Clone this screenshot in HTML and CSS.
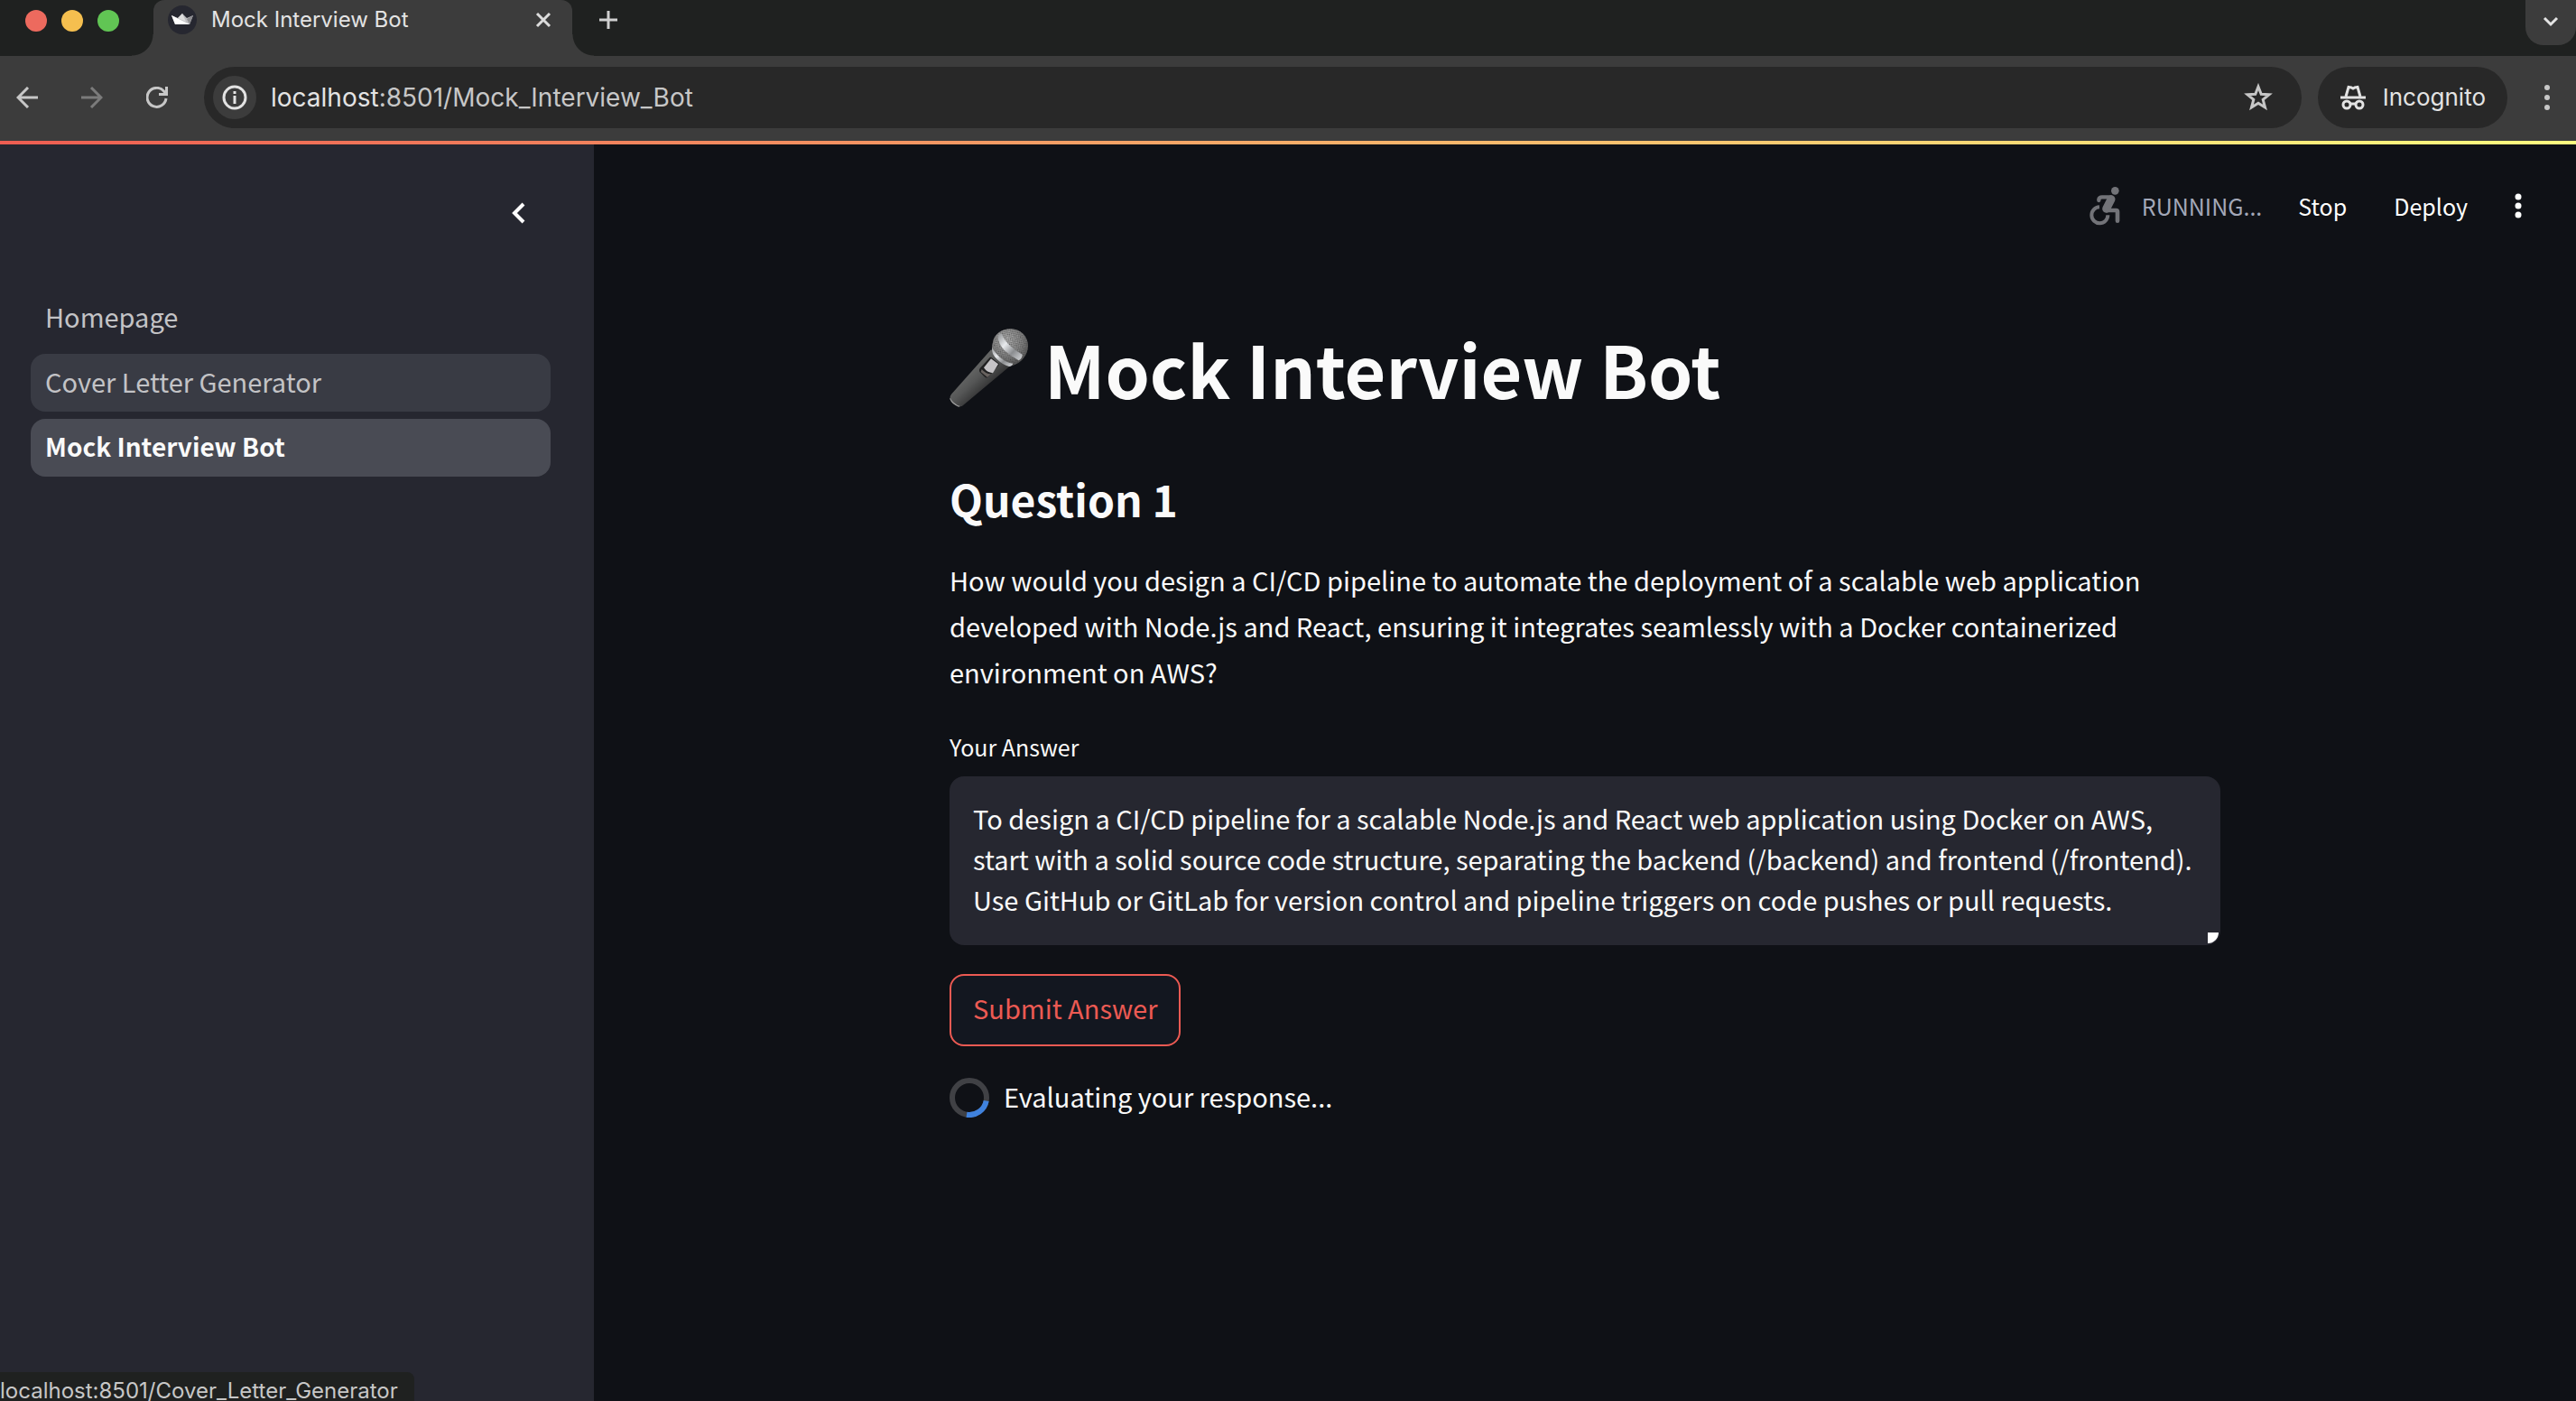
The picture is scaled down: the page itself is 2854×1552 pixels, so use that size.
FILE: index.html
```html
<!DOCTYPE html>
<html lang="en">
<head>
<meta charset="utf-8">
<meta name="viewport" content="width=device-width, initial-scale=1">
<title>Mock Interview Bot</title>
<link rel="stylesheet" href="styles.css">
</head>
<body>
<div class="tabstrip">
  <div class="lights"><span class="light red"></span><span class="light yellow"></span><span class="light green"></span></div>
  <div class="tab">
    <svg class="favicon" viewBox="0 0 32 32" aria-hidden="true"><circle cx="16" cy="16" r="16" fill="#262730"/><path d="M4 11L11 14L16 9L21 14L28 11L24 21H8Z" fill="#bdbdc0"/><path d="M4 11L24 21H8Z" fill="#fff"/><path d="M11 14L16 9L20 18Z" fill="#ddd"/><path d="M28 11L21 15L24 21Z" fill="#8d8d90"/></svg>
    <span class="tab-title">Mock Interview Bot</span>
    <button class="icon-btn" aria-label="Close tab"><svg width="18" height="18" viewBox="0 0 18 18"><path d="M2 2L16 16M16 2L2 16" stroke="#dcdcdc" stroke-width="3"/></svg></button>
  </div>
  <button class="icon-btn new-tab" aria-label="New tab"><svg width="20" height="20" viewBox="0 0 20 20"><path d="M10 0V20M0 10H20" stroke="#d0d0d0" stroke-width="3"/></svg></button>
  <button class="tab-search" aria-label="Search tabs"><svg width="18" height="12" viewBox="0 0 18 12"><path d="M2 2L9 9L16 2" fill="none" stroke="#e3e3e3" stroke-width="3"/></svg></button>
</div>

<div class="toolbar">
  <div class="nav-buttons">
    <button class="icon-btn" aria-label="Back"><svg width="24" height="24" viewBox="0 0 24 24"><path d="M13 1L2 12L13 23M2 12H24" fill="none" stroke="#c7c7c7" stroke-width="3"/></svg></button>
    <button class="icon-btn" aria-label="Forward"><svg width="24" height="24" viewBox="0 0 24 24"><path d="M11 1L22 12L11 23M22 12H0" fill="none" stroke="#7b7b7b" stroke-width="3"/></svg></button>
    <button class="icon-btn" aria-label="Reload"><svg width="24" height="24" viewBox="0 0 24 24"><path d="M22 13A10.500 10.500 0 1 1 19.500 5L22 8" fill="none" stroke="#c7c7c7" stroke-width="3"/><path d="M22.500 0V8.500H14" fill="none" stroke="#c7c7c7" stroke-width="3"/></svg></button>
  </div>
  <div class="omnibox">
    <button class="site-info" aria-label="Site information"><svg width="28" height="28" viewBox="0 0 28 28"><circle cx="14" cy="14" r="12" fill="none" stroke="#e3e3e3" stroke-width="3"/><path d="M14 12V21M14 7V10" stroke="#e3e3e3" stroke-width="3"/></svg></button>
    <span class="url"><span class="host">localhost</span>:8501/Mock_Interview_Bot</span>
    <button class="icon-btn" aria-label="Bookmark this page"><svg width="32" height="32" viewBox="0 0 32 32"><path d="M16 4L19.200 12.300L28 12.800L21.200 18.400L23.500 27L16 22.200L8.500 27L10.800 18.400L4 12.800L12.800 12.300Z" fill="none" stroke="#c7c7c7" stroke-width="3"/></svg></button>
  </div>
  <button class="incognito">
    <svg width="30" height="28" viewBox="0 0 30 28" aria-hidden="true"><g fill="none" stroke="#e3e3e3" stroke-width="3"><path d="M1 14H29"/><path d="M7 13L10 2.500L13 3L15 4L17 3L20 2.500L23 13"/><circle cx="8" cy="22" r="4"/><circle cx="22" cy="22" r="4"/><path d="M12 21H18"/></g></svg>
    Incognito
  </button>
  <button class="icon-btn" aria-label="Browser menu"><svg width="8" height="28" viewBox="0 0 8 28" fill="#c7c7c7"><circle cx="4" cy="3" r="3"/><circle cx="4" cy="14" r="3"/><circle cx="4" cy="25" r="3"/></svg></button>
</div>

<div class="decoration"></div>

<div class="app">
  <aside class="sidebar">
    <div class="sidebar-head">
      <button class="icon-btn" aria-label="Collapse sidebar"><svg width="16" height="24" viewBox="0 0 16 24"><path d="M14 2L4 12L14 22" fill="none" stroke="#fff" stroke-width="4"/></svg></button>
    </div>
    <nav class="pages">
      <a href="#">Homepage</a>
      <a href="#" class="hovered">Cover Letter Generator</a>
      <a href="#" class="current" aria-current="page">Mock Interview Bot</a>
    </nav>
  </aside>

  <main class="main">
    <header class="app-header">
      <div class="status">
        <svg class="status-icon" viewBox="44 50 102 132" aria-hidden="true"><circle cx="129" cy="66" r="13" fill="#727378"/><g fill="none" stroke="#727378"><path d="M75 98V95Q76 87 86 87H116" stroke-width="13" stroke-linecap="round" stroke-linejoin="round"/><path d="M116 94L100 126" stroke-width="27" stroke-linecap="round"/><path d="M98 131H132Q137 131 137 136V166" stroke-width="14" stroke-linecap="round"/><path d="M77 120A27 27 0 1 0 105 147" stroke-width="12"/></g></svg>
        <span>RUNNING...</span>
      </div>
      <button class="header-btn">Stop</button>
      <button class="header-btn deploy">Deploy</button>
      <button class="icon-btn" aria-label="Main menu"><svg width="8" height="28" viewBox="0 0 8 28" fill="#fff"><circle cx="4" cy="4" r="3.500"/><circle cx="4" cy="14" r="3.500"/><circle cx="4" cy="24" r="3.500"/></svg></button>
    </header>

    <div class="content">
      <h1>
        <svg class="mic" viewBox="36 46 264 264" role="img" aria-label="Microphone">
          <defs>
            <linearGradient id="body" x1="0" y1="0" x2="1" y2="1"><stop offset="0.250" stop-color="#6f706f"/><stop offset="0.480" stop-color="#555656"/><stop offset="0.750" stop-color="#1d1d1e"/></linearGradient>
            <linearGradient id="ring" x1="0" y1="0" x2="1" y2="1"><stop offset="0" stop-color="#8f9193"/><stop offset="0.350" stop-color="#e8eaed"/><stop offset="0.650" stop-color="#8b8d90"/><stop offset="1" stop-color="#d5d7da"/></linearGradient>
            <radialGradient id="ball" cx="0.400" cy="0.300" r="0.750"><stop offset="0" stop-color="#c9c9c9"/><stop offset="0.600" stop-color="#8e8e8e"/><stop offset="1" stop-color="#4d4d4d"/></radialGradient>
            <pattern id="mesh" width="8" height="8" patternUnits="userSpaceOnUse" patternTransform="rotate(35)"><rect width="4" height="4" fill="#333"/><rect x="4" y="4" width="4" height="4" fill="#444"/></pattern>
          </defs>
          <path d="M174 116L238 170L82 300Q74 308 62 302Q44 292 38 278Q36 272 42 264Z" fill="url(#body)"/>
          <path d="M38 276Q48 296 72 304L66 306Q44 298 37 280Z" fill="#a0a0a0"/>
          <path d="M180 92C184 64 210 47 240 47C272 48 297 72 297 103C297 134 274 160 246 169Q232 172 214 154L180 122Q174 112 180 92Z" fill="url(#ball)"/>
          <path d="M180 92C184 64 210 47 240 47C272 48 297 72 297 103C297 134 274 160 246 169Q232 172 214 154L180 122Q174 112 180 92Z" fill="url(#mesh)" opacity="0.700"/>
          <path d="M196 68Q202 62 210 64Q216 84 238 104Q258 122 278 132Q278 144 266 152Q240 138 218 118Q198 98 196 68Z" fill="url(#ring)"/>
          <path d="M177 107Q184 124 204 142Q226 160 247 162Q244 171 234 172Q212 166 194 148Q174 130 177 107Z" fill="url(#ring)"/>
          <path d="M170 142Q174 140 178 144L200 162Q202 166 198 170L164 208Q158 212 152 206L136 190Q133 184 137 178Z" fill="#202021"/>
          <path d="M174 146L198 164L180 194Q160 192 150 176Z" fill="#c6c4c7"/>
          <path d="M143 181Q158 198 174 197L162 208L140 190Z" fill="#68625f"/>
        </svg>
        Mock Interview Bot
      </h1>
      <h2>Question 1</h2>
      <p class="question">How would you design a CI/CD pipeline to automate the deployment of a scalable web application developed with Node.js and React, ensuring it integrates seamlessly with a Docker containerized environment on AWS?</p>
      <label for="answer">Your Answer</label>
      <div class="answer-box">
        <textarea id="answer" rows="3" spellcheck="false">To design a CI/CD pipeline for a scalable Node.js and React web application using Docker on AWS, start with a solid source code structure, separating the backend (/backend) and frontend (/frontend). Use GitHub or GitLab for version control and pipeline triggers on code pushes or pull requests.</textarea>
        <span class="grip"></span>
      </div>
      <button class="submit">Submit Answer</button>
      <div class="spinner-row" role="status">
        <svg class="spinner" viewBox="0 0 44 44" aria-hidden="true"><circle cx="22" cy="22" r="19" fill="none" stroke="#404145" stroke-width="6"/><path d="M40.700 25.500A19 19 0 0 1 19 40.800" fill="none" stroke="#3f82de" stroke-width="6"/></svg>
        <span>Evaluating your response...</span>
      </div>
    </div>
  </main>
</div>

<div class="link-preview">localhost:8501/Cover_Letter_Generator</div>
</body>
</html>
```
FILE: styles.css
```css
* { box-sizing: border-box; }

body {
  margin: 0;
  min-height: 100vh;
  display: flex;
  flex-direction: column;
  overflow: hidden;
  background: #0f1116;
  color: #fafafa;
  font: 400 29px/48px "Noto Sans CJK SC", "Noto Sans", sans-serif;
}

button {
  border: 0;
  padding: 0;
  background: none;
  color: inherit;
  font: inherit;
  cursor: pointer;
}

svg { display: block; flex: none; }

.icon-btn { display: flex; flex: none; }

/* Browser window */
.tabstrip {
  display: flex;
  align-items: flex-start;
  height: 62px;
  background: #1f2120;
  font: 400 24px/44px Inter, sans-serif;
  color: #e3e3e3;
}

.lights { display: flex; gap: 16px; width: 170px; padding: 11px 28px; }
.light { width: 24px; height: 24px; border-radius: 50%; }
.red { background: #ed6a5e; }
.yellow { background: #f5bf4f; }
.green { background: #61c554; }

.tab {
  position: relative;
  display: flex;
  align-items: center;
  width: 464px;
  height: 62px;
  padding: 0 23px 18px 16px;
  border-radius: 12px 12px 0 0;
  background: #3c3c3c;
}

.tab::before,
.tab::after {
  content: "";
  position: absolute;
  bottom: 0;
  width: 24px;
  height: 24px;
}

.tab::before { right: 100%; background: radial-gradient(circle at 0 0, #1f2120 23px, #3c3c3c 24px); }
.tab::after { left: 100%; background: radial-gradient(circle at 100% 0, #1f2120 23px, #3c3c3c 24px); }

.favicon { width: 32px; height: 32px; }
.tab-title { flex: 1; padding-left: 16px; }
.new-tab { margin: 12px auto 0 30px; }

.tab-search {
  display: flex;
  justify-content: center;
  width: 56px;
  height: 50px;
  padding-top: 18px;
  border-radius: 0 0 20px 20px;
  background: #3c3c3c;
}

.toolbar {
  display: flex;
  align-items: center;
  height: 94px;
  padding: 0 28px 2px 18px;
  background: #3c3c3c;
  font: 400 28px/44px Inter, sans-serif;
  color: #c7c7c7;
}

.nav-buttons { display: flex; gap: 48px; margin-right: 40px; }

.omnibox {
  flex: 1;
  display: flex;
  align-items: center;
  gap: 16px;
  height: 68px;
  margin-right: 18px;
  padding: 0 32px 0 10px;
  border-radius: 34px;
  background: #282828;
}

.site-info {
  display: grid;
  place-items: center;
  width: 48px;
  height: 48px;
  border-radius: 50%;
  background: #3c3c3c;
}

.url { flex: 1; }
.host { color: #e3e3e3; }

.incognito {
  display: flex;
  align-items: center;
  gap: 18px;
  height: 68px;
  margin-right: 40px;
  padding: 0 24px;
  border-radius: 34px;
  background: #282828;
  color: #e3e3e3;
  font-size: 26px;
}

/* Streamlit app */
.decoration { height: 4px; background: linear-gradient(90deg, #ee5d52, #fffd80); }

.app { flex: 1; display: flex; }

.sidebar { flex: none; width: 658px; background: #262730; }

.sidebar-head {
  display: flex;
  align-items: center;
  justify-content: flex-end;
  height: 152px;
  padding-right: 76px;
}

.pages { display: flex; flex-direction: column; gap: 8px; padding: 8px 48px 0 34px; }

.pages a {
  padding: 6px 16px 10px;
  border-radius: 16px;
  color: #c3c3c6;
  text-decoration: none;
}

.pages .hovered { background: #393b44; }
.pages .current { background: #494b54; color: #fafafa; font-size: 28px; font-weight: 700; }

.main { flex: 1; }

.app-header {
  display: flex;
  align-items: center;
  justify-content: flex-end;
  height: 136px;
  padding-right: 60px;
  font-size: 25px;
}

.status { display: flex; align-items: center; gap: 24px; margin-right: 40px; color: #a3a8b8; }
.status-icon { width: 34px; height: 44px; }
.header-btn { margin-right: 52px; color: #fff; }

.content {
  display: flex;
  flex-direction: column;
  align-items: stretch;
  max-width: 1408px;
  margin: 0 auto;
  padding: 64px 0;
}

h1 {
  display: flex;
  align-items: center;
  gap: 17px;
  margin: 0 0 67px;
  font-size: 79px;
  line-height: 96px;
}

.mic { width: 88px; height: 88px; }

h2 { margin: 0 0 36px; font-size: 48px; line-height: 58px; }

.question { margin: 0 0 37px; line-height: 51px; }

label { margin-bottom: 13px; font-size: 25px; line-height: 40px; }

.answer-box { position: relative; display: flex; }

textarea {
  flex: 1;
  padding: 24px 26px 28px;
  border: 0;
  border-radius: 16px;
  outline: 0;
  resize: none;
  overflow: hidden;
  background: #262730;
  color: inherit;
  font: inherit;
  line-height: 45px;
}

.grip {
  position: absolute;
  right: 2px;
  bottom: 2px;
  width: 12px;
  height: 12px;
  background: #fff;
  border-bottom-right-radius: 12px;
}

.submit {
  align-self: flex-start;
  margin: 32px 0 35px;
  padding: 11px 24px 17px;
  border: 2px solid #ec5a53;
  border-radius: 16px;
  background: #131720;
  color: #ec5a53;
}

.spinner-row { display: flex; align-items: flex-start; gap: 16px; line-height: 40px; }
.spinner { width: 44px; height: 44px; }

/* Hovered link address */
.link-preview {
  position: fixed;
  left: 0;
  bottom: -10px;
  height: 42px;
  padding-right: 18px;
  border-top-right-radius: 8px;
  background: #1f2120;
  color: #c7c7c7;
  font: 400 24px/42px Inter, sans-serif;
}
```
